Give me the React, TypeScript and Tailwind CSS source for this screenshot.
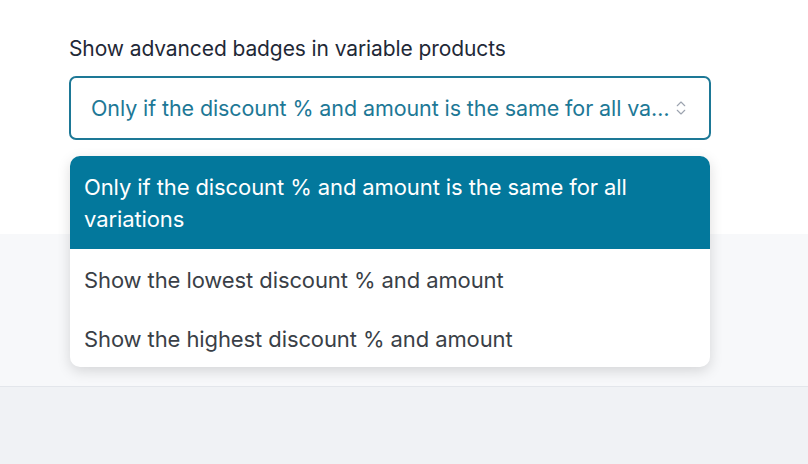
import { ChevronsUpDown } from "lucide-react";

const options = [
  "Only if the discount % and amount is the same for all variations",
  "Show the lowest discount % and amount",
  "Show the highest discount % and amount",
];

export default function App() {
  const selected = 0;

  return (
    <div
      className="relative h-[464px] w-[808px] overflow-hidden bg-[#f0f2f5]"
      style={{ fontFamily: "Inter, 'Noto Sans', sans-serif" }}
    >
      {/* FIELD */}
      <div className="h-[234px] bg-white px-[69px] pt-[36px]">
        <label className="block text-[21px] leading-[26px] tracking-[-0.1px] text-[#1f2937]">
          Show advanced badges in variable products
        </label>

        <div className="relative mt-[14px] flex h-[64px] w-[642px] items-center rounded-[7px] border-2 border-[#1d7896] pl-[20px] pr-[36px]">
          <span className="truncate text-[21.5px] tracking-[-0.1px] text-[#1d7896]">
            {options[selected]}
          </span>
          <ChevronsUpDown
            className="absolute right-[19px] top-1/2 h-[18px] w-[18px] -translate-y-1/2 text-[#9ca3af]"
            strokeWidth={1.5}
          />
        </div>
      </div>

      <div className="h-[153px] border-b border-[#e3e6eb] bg-[#f7f8fa]" />

      {/* MENU */}
      <ul className="absolute left-[70px] top-[156px] w-[640px] overflow-hidden rounded-[10px] bg-white shadow-[0_4px_14px_rgba(0,0,0,0.14)]">
        {options.map((opt, i) => (
          <li
            key={opt}
            className={
              i === selected
                ? "bg-[#03789c] px-[14px] py-[14.5px] text-[22px] leading-[32px] tracking-[-0.1px] text-white"
                : "px-[14px] pt-[15.5px] pb-[13px] text-[22px] leading-[30.5px] tracking-[-0.1px] text-[#3a3f47]"
            }
          >
            {opt}
          </li>
        ))}
      </ul>
    </div>
  );
}
